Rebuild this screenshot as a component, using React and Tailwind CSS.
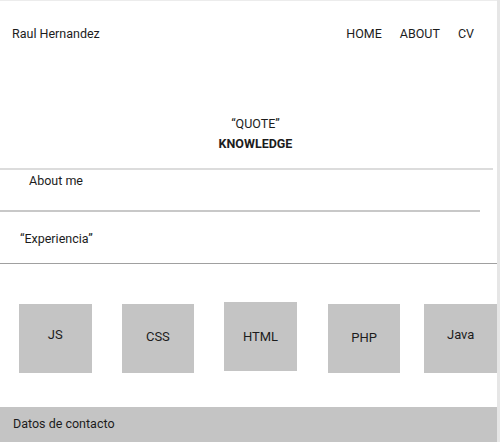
const skills = [
  { name: "JS", box: "ml-[19px] mt-[40px]", text: "pt-[21px]" },
  { name: "CSS", box: "ml-[30px] mt-[40px]", text: "pt-[23px]" },
  { name: "HTML", box: "ml-[30px] mt-[38px]", text: "pt-[25px]" },
  { name: "PHP", box: "ml-[31px] mt-[40px]", text: "pt-[24px]" },
  { name: "Java", box: "ml-[24px] mt-[40px]", text: "pt-[21px]" },
]

const App = () => {
  return (
    <div className="w-[500px] h-[442px] bg-white flex font-['Roboto',sans-serif] text-[#1c1c1c] overflow-hidden">
      <div className="w-[497px] border-t border-[#ececec] flex flex-col">
        <header className="h-[67px] flex items-center justify-between pl-3 pr-[23px] text-[12.5px]">
          <span>Raul Hernandez</span>
          <nav className="flex gap-[18px]">
            <span>HOME</span>
            <span>ABOUT</span>
            <span>CV</span>
          </nav>
        </header>

        <section className="h-[100px] flex flex-col items-center pt-[47px] pl-[14px]">
          <p className="text-[12.5px] leading-[18px]">“QUOTE”</p>
          <p className="text-[12.5px] leading-[18px] font-bold mt-[2px]">KNOWLEDGE</p>
        </section>
        <div className="w-[493px] h-[2px] bg-[#dcdcdc]" />

        <section className="h-[40px] pl-[29px] pt-[2px] text-[12.5px]">About me</section>
        <div className="w-[480px] h-[2px] bg-[#c8c8c8]" />

        <section className="h-[51px] pl-[20px] pt-[18px] text-[12.5px]">“Experiencia”</section>
        <div className="w-full h-px bg-[#a0a0a0]" />

        <section className="h-[143px] flex items-start">
          {skills.map((s) => (
            <div key={s.name} className={`w-[73px] h-[69px] bg-[#c4c4c4] flex justify-center text-[13px] ${s.box} ${s.text}`}>
              {s.name}
            </div>
          ))}
        </section>

        <footer className="h-[35px] bg-[#c4c4c4] flex items-center px-[13px] text-[12.5px]">Datos de contacto</footer>
      </div>
      <div className="w-[3px] bg-[#e6e6e6]" />
    </div>
  )
}

export default App
